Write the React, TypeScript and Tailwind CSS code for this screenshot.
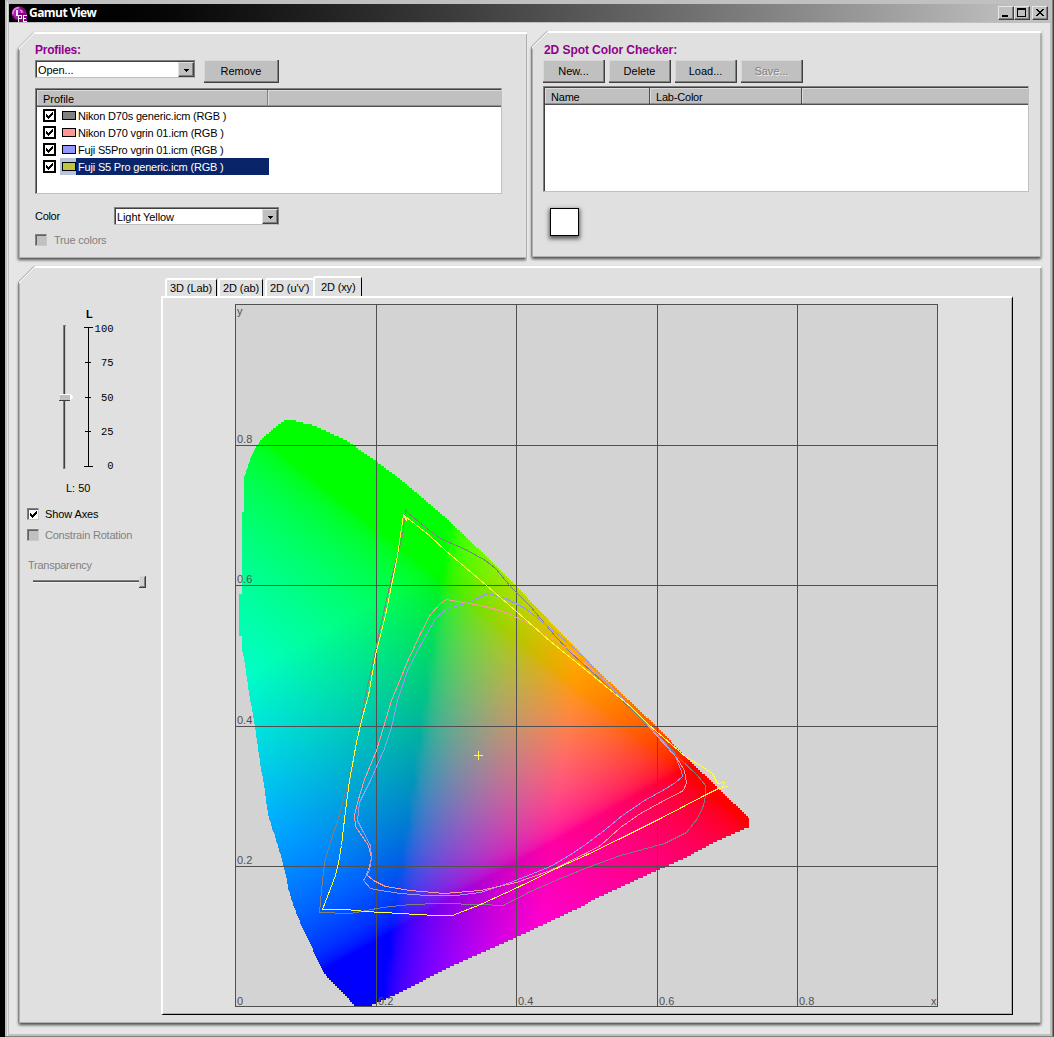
import React from "react";

type Pt = [number, number];

/* ---------- chromaticity diagram data (window pixels) ---------- */

const LEFT_EDGE: Pt[] = [
  [286, 420], [281, 423], [272, 430], [265, 436], [259, 442], [257, 446], [253, 453], [250, 460], [248, 466],
  [246, 472], [244, 476], [244, 512], [242, 513], [242, 593], [239, 594], [239, 636], [242, 637], [242, 651],
  [244, 658], [246, 672], [250, 700], [252, 709], [255, 727], [257, 741], [259, 755], [261, 769], [264, 785],
  [266, 800], [268, 814], [272, 828], [275, 836], [279, 850], [283, 863], [286, 876], [288, 888], [291, 898],
  [297, 915], [303, 929], [308, 940], [313, 950], [318, 962], [323, 971], [328, 978], [337, 987], [345, 995],
  [354, 1005], [356, 1007],
];
const RIGHT_EDGE: Pt[] = [
  [292, 420], [303, 423], [312, 425], [326, 431], [347, 441], [377, 462], [400, 479], [426, 501], [448, 520],
  [487, 557], [517, 587], [560, 632], [600, 673], [657, 727], [686, 757], [720, 790], [749, 818], [749, 827],
  [715, 842], [687, 857], [660, 869], [593, 900], [585, 905], [517, 937], [452, 966], [395, 995], [372, 1005],
  [368, 1007],
];

const GRAY: Pt[] = [
  [405, 509], [407, 512], [430, 531], [442, 539], [465, 549], [485, 560], [495, 568], [510, 586], [530, 606],
  [555, 636], [570, 652], [602, 681], [640, 718], [660, 737], [678, 757], [697, 775], [705, 785], [705, 795],
  [703, 805], [697, 818], [686, 832], [664, 843], [620, 855], [587, 867], [560, 878], [530, 891], [503, 905],
  [480, 904], [440, 903], [410, 904], [382, 907], [350, 913], [319, 912], [321, 890], [324, 862], [330, 841],
  [338, 818], [344, 795], [351, 774], [356, 742], [364, 700], [376, 645], [388, 590], [395, 562], [402, 535],
  [405, 509],
];
const PINK: Pt[] = [
  [446, 599], [440, 603], [430, 614], [420, 633], [407, 661], [391, 700], [383, 727], [376, 750], [364, 779],
  [357, 802], [354, 815], [355, 826], [368, 845], [371, 858], [368, 870], [366, 874], [373, 880], [385, 886],
  [410, 890], [444, 893], [480, 890], [516, 882], [550, 870], [585, 853], [600, 845], [620, 827], [640, 813],
  [660, 802], [683, 790], [686, 782], [684, 770], [676, 757], [657, 736], [645, 722], [620, 697], [606, 681],
  [590, 668], [570, 650], [540, 630], [517, 617], [500, 610], [480, 605], [446, 599],
];
const BLUE: Pt[] = [
  [487, 593], [475, 599], [465, 603], [447, 608], [435, 618], [420, 645], [407, 670], [397, 700], [391, 727],
  [384, 748], [370, 780], [359, 802], [357, 820], [362, 830], [370, 845], [371, 858], [369, 870], [363, 880],
  [370, 888], [380, 890], [400, 893], [426, 895], [455, 895], [480, 892], [510, 882], [550, 866], [572, 853],
  [585, 844], [605, 829], [622, 815], [644, 800], [664, 789], [675, 782], [682, 776], [681, 771], [675, 756],
  [663, 741], [648, 725], [635, 712], [600, 676], [584, 657], [560, 636], [540, 620], [525, 608], [505, 598],
  [487, 593],
];
const YELLOW: Pt[] = [
  [403, 514], [406, 520], [405, 516], [429, 535], [445, 550], [465, 567], [486, 585], [516, 611], [550, 641],
  [586, 670], [630, 706], [648, 724], [686, 757], [700, 765], [712, 773], [717, 783], [724, 782], [722, 787],
  [727, 786], [718, 788], [704, 795], [660, 818], [620, 838], [585, 855], [560, 866], [517, 887], [480, 904],
  [452, 915], [435, 915], [365, 911], [345, 909], [322, 909], [335, 875], [338, 863], [341, 845], [345, 810],
  [349, 780], [356, 742], [361, 720], [368, 695], [375, 655], [386, 610], [397, 555], [403, 514],
];

const at = (edge: Pt[], y: number) => {
  for (let i = 1; i < edge.length; i++) {
    const [x0, y0] = edge[i - 1];
    const [x1, y1] = edge[i];
    if (y <= y1) return x0 + ((x1 - x0) * (y - y0)) / (y1 - y0 || 1);
  }
  return edge[edge.length - 1][0];
};

const gamma = (v: number) => Math.round(255 * Math.pow(Math.min(1, Math.max(0, v)), 1 / 1.7));

const colorAt = (px: number, py: number) => {
  const x = (px - 235.5) / 702;
  const y = (1006.5 - py) / 702;
  const z = 1 - x - y;
  const r = 4.8 * (x - 0.21 - 0.14 * y);
  const g = 1.12 * (-1.0 * x + 1.876 * y + 0.03 * z);
  const b = 1.48 * (0.0557 * x - 0.204 * y + 1.057 * z);
  return `rgb(${gamma(r)},${gamma(g)},${gamma(b)})`;
};

const STEP = 2;
const CELL = 6;
const rows = Array.from({ length: 293 }, (_, i) => {
  const y = 420 + i * STEP;
  const l = Math.round(at(LEFT_EDGE, y + 1));
  const r = Math.round(at(RIGHT_EDGE, y + 1));
  const x0 = Math.floor(l / CELL) * CELL;
  const x1 = Math.ceil(r / CELL) * CELL;
  const n = (x1 - x0) / CELL;
  const stops = Array.from({ length: n + 1 }, (_, k) => ({ o: k / n, c: colorAt(x0 + k * CELL, y + 1) }));
  return { y, l, r, x0, x1, stops };
});

const pts = (p: Pt[]) => p.map(([x, y]) => `${x + 0.5},${y + 0.5}`).join(" ");

function Gamut() {
  return (
    <svg width="704" height="703" viewBox="235 304 704 703" className="block" shapeRendering="crispEdges">
      <defs>
        {rows.map((r, i) => (
          <linearGradient key={i} id={`row${i}`} gradientUnits="userSpaceOnUse" x1={r.x0} x2={r.x1} y1="0" y2="0">
            {r.stops.map((s, k) => (
              <stop key={k} offset={s.o} stopColor={s.c} />
            ))}
          </linearGradient>
        ))}
      </defs>
      <rect x="235" y="304" width="703" height="703" fill="#d3d3d3" />
      {rows.map((r, i) => (
        <rect key={i} x={r.l} y={r.y} width={r.r - r.l} height={STEP} fill={`url(#row${i})`} />
      ))}
      <g fill="#505050">
        {[235, 376, 516, 657, 797, 937].map((x) => (
          <rect key={x} x={x} y="304" width="1" height="703" />
        ))}
        {[304, 445, 585, 726, 866, 1006].map((y) => (
          <rect key={y} x="235" y={y} width="703" height="1" />
        ))}
      </g>
      <g fill="none" strokeWidth="1">
        <polyline points={pts(GRAY)} stroke="#808080" />
        <polyline points={pts(PINK)} stroke="#ff9999" />
        <polyline points={pts(BLUE)} stroke="#9999ee" />
        <polyline points={pts(YELLOW)} stroke="#ffff40" />
        <path d="M474 755.5h9M478.5 751v9" stroke="#ffff40" />
      </g>
      <g fill="#505050" fontFamily="Liberation Sans, sans-serif" fontSize="11">
        <text x="237" y="315">y</text>
        <text x="931" y="1005">x</text>
        <text x="237" y="443">0.8</text>
        <text x="237" y="583">0.6</text>
        <text x="237" y="724">0.4</text>
        <text x="237" y="864">0.2</text>
        <text x="237" y="1005">0</text>
        <text x="378" y="1005">0.2</text>
        <text x="518" y="1005">0.4</text>
        <text x="659" y="1005">0.6</text>
        <text x="799" y="1005">0.8</text>
      </g>
    </svg>
  );
}

/* ---------- window chrome ---------- */

function Panel({ className, flat, children }: { className: string; flat?: boolean; children: React.ReactNode }) {
  return (
    <section className={`relative ${className}`}>
      <div
        className={
          flat
            ? "absolute inset-0 [filter:drop-shadow(-1px_2px_1.5px_rgba(0,0,0,0.65))] [clip-path:inset(-5px_0_-8px_-8px)]"
            : "absolute inset-0 [filter:drop-shadow(0_2px_1.5px_rgba(0,0,0,0.6))_drop-shadow(-1px_0_0.5px_rgba(0,0,0,0.25))]"
        }
      >
        <div className="h-full bg-white [clip-path:polygon(16px_0,100%_0,100%_100%,0_100%,0_16px)]">
          <div className="h-full bg-[#b0b0b0] [clip-path:polygon(16px_2px,100%_2px,100%_100%,0_100%,0_18px)]">
            <div className="h-full bg-[#e0e0e0] [clip-path:polygon(16px_2px,calc(100%-1px)_2px,calc(100%-1px)_calc(100%-1px),1px_calc(100%-1px),1px_17px)]" />
          </div>
        </div>
      </div>
      <div className="relative h-full">{children}</div>
    </section>
  );
}

function Button({ className, disabled, children }: { className: string; disabled?: boolean; children: React.ReactNode }) {
  return (
    <button
      className={`flex h-[23px] items-center justify-center border-b border-r border-[#404040] bg-[#c0c0c0] shadow-[inset_-1px_-1px_0_#808080,inset_1px_1px_0_#d8d8d8] ${
        disabled ? "text-[#808080] [text-shadow:1px_1px_0_#f0f0f0]" : "text-black"
      } ${className}`}
    >
      {children}
    </button>
  );
}

function Select({ className, children }: { className: string; children: React.ReactNode }) {
  return (
    <div className={`flex h-[18px] border border-[#808080] border-b-[#c0c0c0] bg-white shadow-[inset_1px_1px_0_#404040] ${className}`}>
      <span className="flex-1 pl-0.5 pt-px leading-4 tracking-[-0.1px]">{children}</span>
      <span className="mt-px flex h-[15px] w-4 items-center justify-center border border-[#e0e0e0] border-b-[#404040] border-r-[#404040] bg-[#c0c0c0] shadow-[inset_-1px_-1px_0_#808080]">
        <svg width="5" height="3" shapeRendering="crispEdges" className="mt-px">
          <path d="M0 0h5v1H0zM1 1h3v1H1zM2 2h1v1H2z" />
        </svg>
      </span>
    </div>
  );
}

function Tick() {
  return (
    <svg width="7" height="7" shapeRendering="crispEdges">
      <path d="M0 2h1v3H0zM1 3h1v3H1zM2 4h1v3H2zM3 3h1v3H3zM4 2h1v3H4zM5 1h1v3H5zM6 0h1v3H6z" />
    </svg>
  );
}

function Box({ checked }: { checked?: boolean }) {
  return (
    <span
      className={`flex size-3 items-center justify-center border border-[#c8c8c8] border-l-[#808080] border-t-[#808080] shadow-[inset_1px_1px_0_#606060] ${
        checked ? "bg-white" : "bg-[#c0c0c0]"
      }`}
    >
      {checked && <Tick />}
    </span>
  );
}

function HeadCell({ className, children }: { className: string; children?: React.ReactNode }) {
  return (
    <div className={`h-[17px] border-b border-[#505050] bg-[#c0c0c0] pl-1.5 leading-[19px] shadow-[inset_0_-1px_0_#909090,inset_1px_1px_0_#dcdcdc] ${className}`}>
      {children}
    </div>
  );
}

const PROFILES = [
  { name: "Nikon D70s generic.icm (RGB )", swatch: "bg-[#808080]" },
  { name: "Nikon D70 vgrin 01.icm (RGB )", swatch: "bg-[#ff9595]" },
  { name: "Fuji S5Pro vgrin 01.icm (RGB )", swatch: "bg-[#9595ff]" },
  { name: "Fuji S5 Pro generic.icm (RGB )", swatch: "bg-[#c0c440]", selected: true },
];

const WINBTN =
  "flex h-[14px] w-4 border border-[#e6e6e6] border-b-[#404040] border-r-[#404040] bg-[#c0c0c0] shadow-[inset_-1px_-1px_0_#808080]";

function TitleBar() {
  return (
    <header className="flex h-[18px] items-center bg-linear-to-r from-black to-[#c0c0c0] to-97% pr-0.5">
      <svg width="17" height="17" viewBox="0 0 17 17" className="ml-0.5 mt-0.5">
        <ellipse cx="8" cy="7.5" rx="7.2" ry="7" fill="#b020b0" />
        <path d="M1.8 8A6 6 0 0 1 8 1.600" stroke="#e880e8" strokeWidth="1.6" fill="none" />
        <path d="M9 1.600a6 6 0 0 1 5 5" stroke="#800080" strokeWidth="1.6" fill="none" />
        <path d="M6 4v6" stroke="#fff" strokeWidth="1.800" fill="none" />
        <path d="M9 4q3 1 1.500 4" stroke="#f0b0f0" strokeWidth="1.2" fill="none" />
        <path d="M2 10q2 4 5 4" stroke="#600060" strokeWidth="1" fill="none" />
        <path d="M7 7h9v9H7z" fill="#800080" />
        <path d="M7.500 16V9.500H10.500V12.500H7.500M15.500 9.500H12.500V15.500H15.500M12.500 12.500H15" stroke="#fff" fill="none" shapeRendering="crispEdges" />
      </svg>
      <h1 className="ml-px flex-1 text-[12px] font-bold tracking-[-0.55px] text-white [font-family:'Open_Sans',sans-serif]">Gamut View</h1>
      <div className={WINBTN}>
        <svg width="14" height="12" shapeRendering="crispEdges"><path d="M3 8h6v2H3z" /></svg>
      </div>
      <div className={WINBTN}>
        <svg width="14" height="12" shapeRendering="crispEdges"><path fillRule="evenodd" d="M2 1h9v9H2zM3 3h7v6H3z" /></svg>
      </div>
      <div className={`ml-0.5 ${WINBTN}`}>
        <svg width="14" height="12" shapeRendering="crispEdges">
          <path d="M3 2h2v1H3zM9 2h2v1H9zM4 3h2v1H4zM8 3h2v1H8zM5 4h4v1H5zM6 5h2v1H6zM5 6h4v1H5zM4 7h2v1H4zM8 7h2v1H8zM3 8h2v1H3zM9 8h2v1H9z" />
        </svg>
      </div>
    </header>
  );
}

function ProfilesPanel() {
  return (
    <Panel className="mt-px h-[226px] w-[508px]" flat>
      <div className="flex h-full flex-col pl-4 pt-[11px]">
        <h2 className="h-[17px] text-[12px] font-bold leading-[14px] tracking-[-0.25px] text-[#90008c]">Profiles:</h2>
        <div className="flex">
          <Select className="w-[160px]">Open...</Select>
          <Button className="ml-[9px] w-[75px]">Remove</Button>
        </div>
        <div className="mt-[5px] h-[106px] w-[467px] border border-[#808080] border-b-[#c0c0c0] border-r-[#c0c0c0] bg-white shadow-[inset_1px_1px_0_#404040]">
          <div className="ml-px mt-px flex">
            <HeadCell className="w-[231px] border-r border-r-[#808080]">Profile</HeadCell>
            <HeadCell className="flex-1" />
          </div>
          {PROFILES.map((p) => (
            <div key={p.name} className="flex h-[17px] items-center pl-[7px]">
              <span className="mb-px flex size-[13px] items-center justify-center border-2 border-black bg-white"><Tick /></span>
              <span className={`ml-1 flex h-[17px] items-center pl-0.5 ${p.selected ? "bg-[#b8c4dc]" : ""}`}>
                <span className={`mb-px h-[9px] w-[14px] border border-black ${p.swatch}`} />
              </span>
              <span className={`h-[17px] whitespace-nowrap pl-0.5 leading-[18px] tracking-[-0.18px] ${p.selected ? "w-[193px] bg-[#0a246a] text-white" : ""}`}>
                {p.name}
              </span>
            </div>
          ))}
        </div>
        <div className="mt-[13px] flex items-center">
          <span className="w-[79px] tracking-[-0.3px]">Color</span>
          <Select className="w-[165px]">Light Yellow</Select>
        </div>
        <label className="mt-[9px] flex items-center gap-[7px] text-[#808080]">
          <Box />
          <span className="leading-3 tracking-[-0.2px]">True colors</span>
        </label>
      </div>
    </Panel>
  );
}

function CheckerPanel() {
  return (
    <Panel className="ml-[5px] h-[226px] w-[509px]">
      <div className="flex h-full flex-col pl-3 pt-3">
        <h2 className="h-[17px] text-[12px] font-bold leading-[14px] tracking-[-0.07px] text-[#90008c]">2D Spot Color Checker:</h2>
        <div className="-ml-px flex gap-1">
          <Button className="w-[62px]">New...</Button>
          <Button className="w-[62px]">Delete</Button>
          <Button className="w-[62px]">Load...</Button>
          <Button className="w-[62px]" disabled>Save...</Button>
        </div>
        <div className="-ml-px mt-[3px] h-[106px] w-[486px] border border-[#808080] border-b-[#c0c0c0] border-r-[#c0c0c0] bg-white shadow-[inset_1px_1px_0_#404040]">
          <div className="ml-px mt-px flex">
            <HeadCell className="w-[105px] border-r border-r-[#505050] tracking-[-0.2px]">Name</HeadCell>
            <HeadCell className="w-[152px] border-r border-r-[#505050] tracking-[-0.2px]">Lab-Color</HeadCell>
            <HeadCell className="flex-1" />
          </div>
        </div>
        <div className="ml-[6px] mt-4 h-7 w-[29px] border border-black bg-white shadow-[0_2px_4px_1px_rgba(0,0,0,0.6)]" />
      </div>
    </Panel>
  );
}

function Sidebar() {
  const ticks: [number, string][] = [[328, "100"], [362, "75"], [397, "50"], [431, "25"], [465, "0"]];
  return (
    <aside className="flex w-[142px] flex-col pl-2">
      <svg width="120" height="170" viewBox="27 306 120 170" className="mt-10" shapeRendering="crispEdges">
        <text x="86" y="318" fontSize="11" fontWeight="700" fontFamily="Liberation Sans, sans-serif">L</text>
        <path d="M63 325h3v144h-3z" fill="#808080" />
        <path d="M64 326h1v142h-1z" fill="#404040" />
        <path d="M65 326h1v143h-1z" fill="#c8c8c8" />
        <path d="M60 394h10l3 3-3 3H60z" fill="#fff" />
        <path d="M60 395h10v5H60z" fill="#c0c0c0" />
        <path d="M59 400h11v1H59z" fill="#404040" />
        <path d="M88 327h1v140h-1z" />
        {ticks.map(([y, t], i) => (
          <g key={t}>
            <rect x={i % 4 === 0 ? 84 : 85} y={i === 4 ? 466 : i === 0 ? 327 : y} width={i % 4 === 0 ? 9 : 6} height="1" />
            <text x={113.5} y={y + 4} textAnchor="end" fontSize="10.5" fontFamily="Liberation Mono, monospace">{t}</text>
          </g>
        ))}
      </svg>
      <span className="mt-[6px] pl-[39px] leading-3">L: 50</span>
      <label className="mt-[14px] flex items-center gap-[6px]"><Box checked /><span className="leading-3 tracking-[-0.1px]">Show Axes</span></label>
      <label className="mt-[9px] flex items-center gap-[6px] text-[#808080]"><Box /><span className="leading-3 tracking-[-0.22px]">Constrain Rotation</span></label>
      <span className="mt-[18px] pl-px leading-3 tracking-[-0.26px] text-[#808080]">Transparency</span>
      <svg width="120" height="14" viewBox="27 575 120 14" className="mt-[4px]" shapeRendering="crispEdges">
        <path d="M33 580h107v1H33z" fill="#808080" />
        <path d="M33 581h107v1H33z" fill="#505050" />
        <path d="M33 582h107v1H33z" fill="#f0f0f0" />
        <path d="M139 576h7v12h-7z" fill="#404040" />
        <path d="M139 576h6v11h-6z" fill="#d8d8d8" />
        <path d="M140 577h5v10h-5z" fill="#808080" />
        <path d="M140 577h4v9h-4z" fill="#d0d0d0" />
      </svg>
    </aside>
  );
}

const TAB = "rounded-t-[3px] border-l-2 border-t-2 border-white whitespace-nowrap tracking-[-0.1px]";

function GraphPanel() {
  return (
    <Panel className="mt-[8px] h-[757px] w-[1022px]">
      <div className="flex h-full">
        <Sidebar />
        <div className="pt-[10px]">
          <div className="flex h-5 items-end pl-[4px]">
            <div className={`h-[18px] w-[52px] border-r border-r-black pl-[3px] leading-[17px] ${TAB}`}>3D (Lab)</div>
            <div className={`ml-px h-[18px] w-[45px] border-r border-r-black pl-[3px] leading-[17px] ${TAB}`}>2D (ab)</div>
            <div className={`ml-[2px] h-[18px] w-[49px] pl-[3px] leading-[17px] ${TAB}`}>2D (u'v')</div>
            <div className={`-ml-px h-5 w-[49px] border-r border-r-black bg-[#e0e0e0] pl-[6px] leading-[19px] tracking-[-0.15px]! ${TAB}`}>2D (xy)</div>
          </div>
          <div className="h-[719px] w-[852px] border-b border-l-2 border-r border-t-2 border-b-black border-l-white border-r-black border-t-white pl-[72px] pt-[6px] shadow-[inset_-1px_-1px_0_#b0b0b0]">
            <Gamut />
          </div>
        </div>
      </div>
    </Panel>
  );
}

export default function App() {
  return (
    <div className="h-[1037px] w-[1054px] overflow-hidden bg-black pl-[5px] text-[11px] text-black [font-family:'Liberation_Sans',Arial,sans-serif]">
      <div className="h-[1037px] border-b border-r border-b-[#808080] border-r-[#404040] bg-[#c0c0c0] shadow-[inset_-1px_0_0_#808080,inset_2px_2px_0_#c0c0c0,inset_3px_2px_0_#e6e6e6] pl-1 pr-[3px] pt-1">
        <TitleBar />
        <main className="mt-px h-[1011px] bg-[#e6e6e6] pl-[10px] pt-2">
          <div className="flex">
            <ProfilesPanel />
            <CheckerPanel />
          </div>
          <GraphPanel />
        </main>
      </div>
    </div>
  );
}
